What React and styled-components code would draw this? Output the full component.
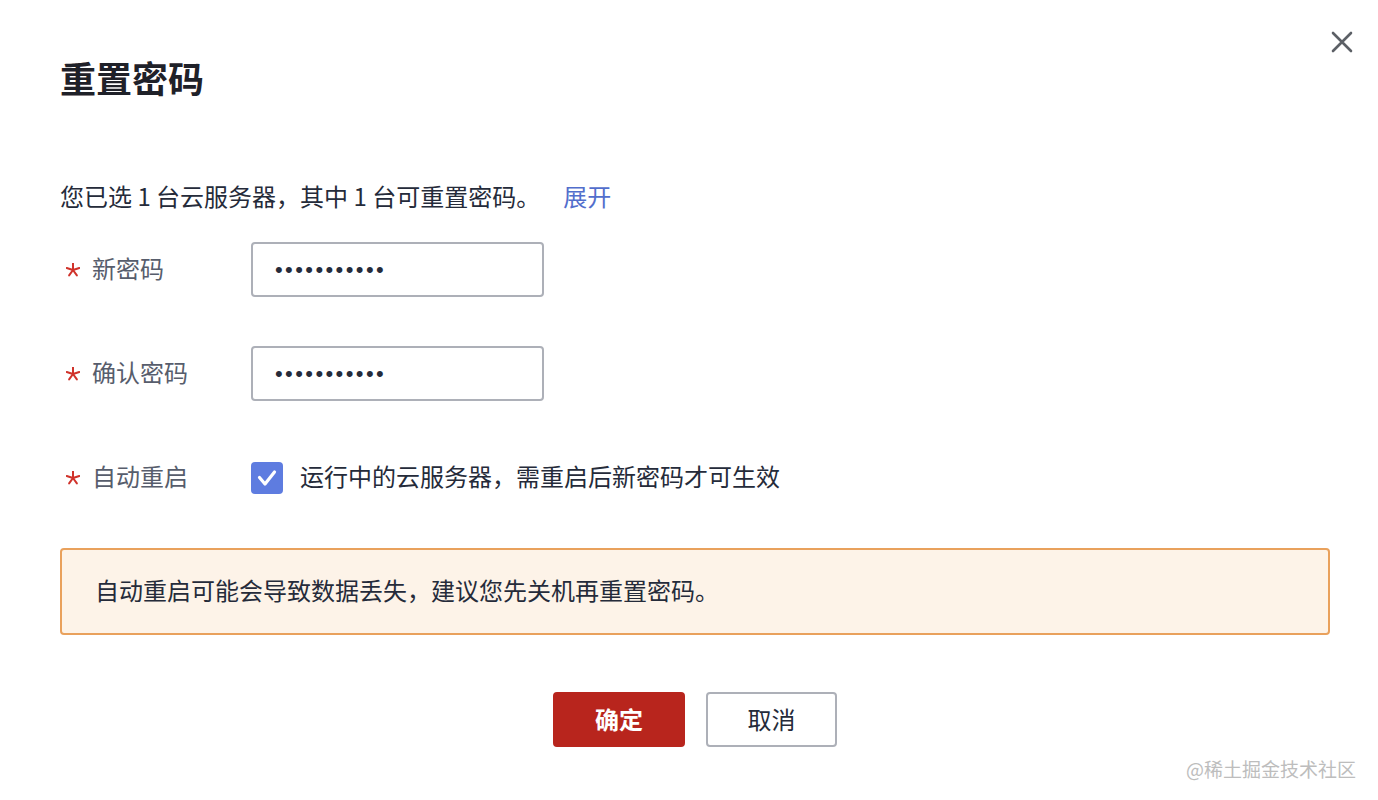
import React from "react";
import styled, { createGlobalStyle } from "styled-components";

const GlobalStyle = createGlobalStyle`
  body {
    margin: 0;
    background: #ffffff;
    font-family: "Noto Sans CJK SC", "Noto Sans", sans-serif;
  }
`;

const Dialog = styled.div`
  position: relative;
  width: 1378px;
  height: 800px;
  box-sizing: border-box;
  padding: 53px 48px 0 60px;
  background: #fff;
`;

const Title = styled.h2`
  margin: 0;
  font-size: 36px;
  line-height: 48px;
  font-weight: 700;
  color: #1f2129;
`;

const CloseButton = styled.button`
  position: absolute;
  top: 28px;
  right: 22px;
  width: 28px;
  height: 28px;
  padding: 0;
  border: none;
  background: none;
  display: flex;
  align-items: center;
  justify-content: center;
`;

const Info = styled.p`
  margin: 79px 0 0;
  font-size: 24px;
  line-height: 32px;
  color: #252b3a;
`;

const Link = styled.a`
  margin-left: 23px;
  color: #526ecc;
  text-decoration: none;
`;

const Form = styled.div`
  margin-top: 30px;
  display: flex;
  flex-direction: column;
  gap: 49px;
`;

const Row = styled.div`
  display: flex;
  align-items: center;
  height: 55px;
`;

const Label = styled.label`
  width: 191px;
  display: flex;
  align-items: center;
  font-size: 24px;
  line-height: 32px;
  padding-bottom: 4px;
  color: #575d6c;
`;

const Star = styled.svg`
  margin: 4px 12px 0 6px;
  flex-shrink: 0;
`;

const Input = styled.input`
  width: 293px;
  height: 55px;
  box-sizing: border-box;
  border: 2px solid #adb0b8;
  border-radius: 4px;
  padding: 0 0 0 22px;
  font-family: "Liberation Sans", sans-serif;
  font-size: 22px;
  letter-spacing: 2.4px;
  color: #252b3a;
  outline: none;
`;

const Check = styled.span`
  width: 32px;
  height: 32px;
  border-radius: 4px;
  background: #5e7ce0;
  display: flex;
  align-items: center;
  justify-content: center;
`;

const CheckText = styled.span`
  margin-left: 17px;
  font-size: 24px;
  line-height: 32px;
  padding-bottom: 4px;
  color: #252b3a;
`;

const Alert = styled.div`
  margin-top: 43px;
  height: 87px;
  box-sizing: border-box;
  border: 2px solid #e9a15c;
  border-radius: 4px;
  background: #fdf3e8;
  padding: 0 33px 4px;
  display: flex;
  align-items: center;
  font-size: 24px;
  color: #252b3a;
`;

const Footer = styled.div`
  margin-top: 57px;
  display: flex;
  justify-content: center;
  gap: 21px;
`;

const Button = styled.button`
  width: ${p => (p.$primary ? "132px" : "131px")};
  height: 55px;
  box-sizing: border-box;
  border-radius: 4px;
  border: 2px solid ${p => (p.$primary ? "#b8251d" : "#adb0b8")};
  background: ${p => (p.$primary ? "#b8251d" : "#fff")};
  color: ${p => (p.$primary ? "#fff" : "#252b3a")};
  font-family: "Noto Sans CJK SC", sans-serif;
  font-size: 24px;
  font-weight: ${p => (p.$primary ? 700 : 400)};
  padding: 0 0 3px;
`;

const Watermark = styled.div`
  position: absolute;
  right: 22px;
  bottom: 18px;
  font-size: 19px;
  color: #bdbdbd;
`;

const StarIcon = () => (
  <Star width="14" height="14" viewBox="-7 -7 14 14">
    {[0, 72, 144, 216, 288].map(a => (
      <line
        key={a}
        x1="0"
        y1="0"
        x2="0"
        y2="-6.6"
        stroke="#d0332b"
        strokeWidth="2"
        strokeLinecap="round"
        transform={`rotate(${a})`}
      />
    ))}
  </Star>
);

const fields = [
  { label: "新密码", value: "abcdefghijk" },
  { label: "确认密码", value: "abcdefghijk" }
];

export default function App() {
  return (
    <>
      <GlobalStyle />
      <Dialog>
        <Title>重置密码</Title>
        <CloseButton aria-label="close">
          <svg width="24" height="24" viewBox="0 0 24 24">
            <path d="M3 3L21 21M21 3L3 21" stroke="#5c6066" strokeWidth="2.6" strokeLinecap="round" />
          </svg>
        </CloseButton>
        <Info>
          您已选 1 台云服务器，其中 1 台可重置密码。
          <Link href="#">展开</Link>
        </Info>
        <Form>
          {fields.map(f => (
            <Row key={f.label}>
              <Label>
                <StarIcon />
                {f.label}
              </Label>
              <Input type="password" defaultValue={f.value} readOnly />
            </Row>
          ))}
          <Row>
            <Label>
              <StarIcon />
              自动重启
            </Label>
            <Check>
              <svg width="32" height="32" viewBox="0 0 32 32">
                <path d="M8.5 15.5L14 22L23.5 10" fill="none" stroke="#fff" strokeWidth="3.2" strokeLinecap="round" strokeLinejoin="round" />
              </svg>
            </Check>
            <CheckText>运行中的云服务器，需重启后新密码才可生效</CheckText>
          </Row>
        </Form>
        <Alert>自动重启可能会导致数据丢失，建议您先关机再重置密码。</Alert>
        <Footer>
          <Button $primary>确定</Button>
          <Button>取消</Button>
        </Footer>
        <Watermark>@稀土掘金技术社区</Watermark>
      </Dialog>
    </>
  );
}
